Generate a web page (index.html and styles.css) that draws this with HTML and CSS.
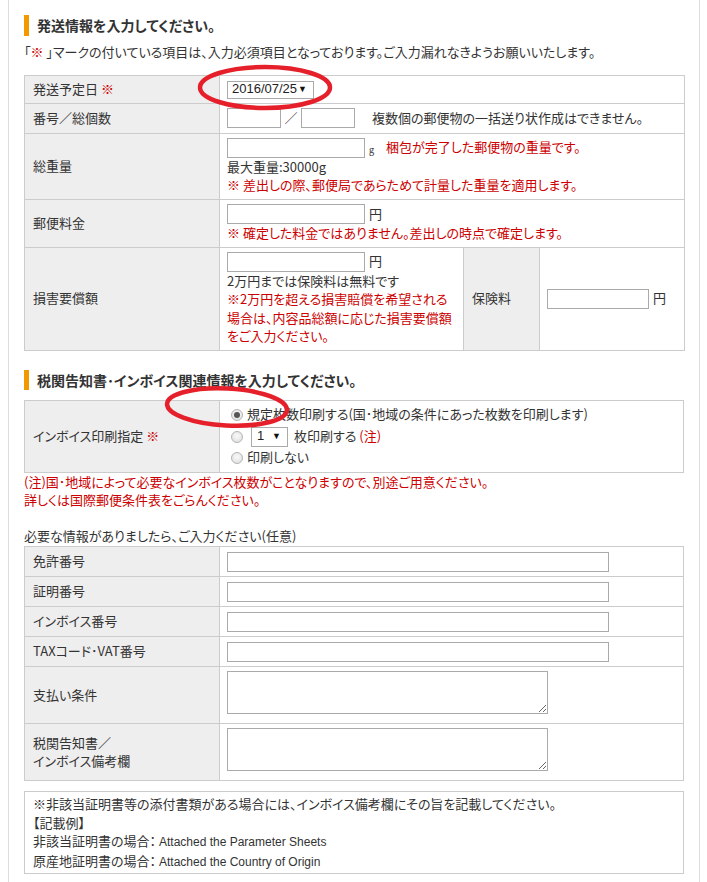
FILE: index.html
```html
<!DOCTYPE html>
<html lang="ja">
<head>
<meta charset="utf-8">
<title>発送情報の入力</title>
<link rel="stylesheet" href="styles.css">
</head>
<body>
<div class="page">
  <h2 class="sec-title first">発送情報を入力してください。</h2>
  <p class="intro">「<span class="req">※</span> 」マークの付いている項目は、入力必須項目となっております。ご入力漏れなきようお願いいたします。</p>

  <table class="form t1">
    <colgroup><col class="c-label"><col class="c-val"><col class="c-ins"><col class="c-insval"></colgroup>
    <tr class="h28">
      <th>発送予定日 <span class="req">※</span></th>
      <td colspan="3"><span class="sel sel-date"><span class="sel-text">2016/07/25</span><span class="sel-arrow">▼</span></span></td>
    </tr>
    <tr class="h30">
      <th>番号／総個数</th>
      <td colspan="3">
        <div class="line-in">
          <input class="in in-xs" type="text"><span class="slash">／</span><input class="in in-xs" type="text"><span class="aside">複数個の郵便物の一括送り状作成はできません。</span>
        </div>
      </td>
    </tr>
    <tr class="h66">
      <th>総重量</th>
      <td colspan="3" class="stack">
        <div class="line-in"><input class="in in-m" type="text"><span class="unit-g">g</span><span class="warn warn-g">梱包が完了した郵便物の重量です。</span></div>
        <div>最大重量:30000g</div>
        <div class="warn">※ 差出しの際、郵便局であらためて計量した重量を適用します。</div>
      </td>
    </tr>
    <tr class="h48">
      <th>郵便料金</th>
      <td colspan="3" class="stack">
        <div class="line-in"><input class="in in-m" type="text"><span class="unit">円</span></div>
        <div class="warn">※ 確定した料金ではありません。差出しの時点で確定します。</div>
      </td>
    </tr>
    <tr class="h102">
      <th>損害要償額</th>
      <td class="stack">
        <div class="line-in"><input class="in in-m" type="text"><span class="unit">円</span></div>
        <div>2万円までは保険料は無料です</div>
        <div class="warn">※2万円を超える損害賠償を希望される<br>場合は、内容品総額に応じた損害要償額<br>をご入力ください。</div>
      </td>
      <th class="th-ins">保険料</th>
      <td><div class="line-in"><input class="in in-ins" type="text"><span class="unit">円</span></div></td>
    </tr>
  </table>

  <h2 class="sec-title second">税関告知書･インボイス関連情報を入力してください。</h2>

  <table class="form t2">
    <colgroup><col class="c-label"><col></colgroup>
    <tr class="h72">
      <th>インボイス印刷指定 <span class="req">※</span></th>
      <td class="radios">
        <label class="r-line r1"><span class="radio checked"></span>規定枚数印刷する(国･地域の条件にあった枚数を印刷します)</label>
        <label class="r-line r2"><span class="radio"></span><span class="sel sel-num"><span class="sel-text">1</span><span class="sel-arrow">▼</span></span><span class="r-text">枚印刷する <span class="req">(注)</span></span></label>
        <label class="r-line r3"><span class="radio"></span>印刷しない</label>
      </td>
    </tr>
  </table>
  <p class="warn notes">(注)国･地域によって必要なインボイス枚数がことなりますので、別途ご用意ください。<br>詳しくは国際郵便条件表をごらんください。</p>

  <p class="optional">必要な情報がありましたら、ご入力ください(任意)</p>
  <table class="form t3">
    <colgroup><col class="c-label"><col></colgroup>
    <tr class="h30"><th>免許番号</th><td><input class="in in-l" type="text"></td></tr>
    <tr class="h30"><th>証明番号</th><td><input class="in in-l" type="text"></td></tr>
    <tr class="h30"><th>インボイス番号</th><td><input class="in in-l" type="text"></td></tr>
    <tr class="h30"><th>TAXコード･VAT番号</th><td><input class="in in-l" type="text"></td></tr>
    <tr class="h57"><th>支払い条件</th><td class="ta-cell"><textarea class="ta"></textarea></td></tr>
    <tr class="h57"><th>税関告知書／<br>インボイス備考欄</th><td class="ta-cell"><textarea class="ta"></textarea></td></tr>
  </table>

  <div class="notebox">
    <div>※非該当証明書等の添付書類がある場合には、インボイス備考欄にその旨を記載してください。</div>
    <div>【記載例】</div>
    <div>非該当証明書の場合： <span class="en">Attached the Parameter Sheets</span></div>
    <div>原産地証明書の場合： <span class="en">Attached the Country of Origin</span></div>
  </div>
</div>

<svg class="marks" width="707" height="882" viewBox="0 0 707 882" aria-hidden="true">
  <ellipse cx="265" cy="87.5" rx="65" ry="20.5" fill="none" stroke="#e5202a" stroke-width="4.5"/>
  <ellipse cx="227" cy="407" rx="60" ry="18.5" fill="none" stroke="#e5202a" stroke-width="4.5" transform="rotate(3 227 407)"/>
</svg>
</body>
</html>
```

FILE: styles.css
```css
html, body {
  margin: 0;
  padding: 0;
}
body {
  position: relative;
  font-family: "Noto Sans CJK JP", sans-serif;
  font-size: 13px;
  line-height: 18.5px;
  color: #333;
  font-feature-settings: "palt";
  background: #fff;
}
.page {
  margin-left: 8px;
  width: 660px;
  padding: 1px 15px 10px;
  min-height: 871px;
  border-left: 1px solid #ddd;
  border-right: 1px solid #ddd;
}
.sec-title {
  margin: 0;
  font-size: 14px;
  font-weight: bold;
  line-height: 21px;
  border-left: 5px solid #f39800;
  padding-left: 8px;
  color: #333;
}
.sec-title.first { margin-top: 14px; }
.sec-title.second { margin-top: 19px; margin-bottom: 10px; line-height: 20px; }
.intro {
  margin: 7px 0 13px;
}
.req { color: #cc0000; }
.warn { color: #cc0000; }

table.form {
  width: 660px;
  border-collapse: collapse;
  table-layout: fixed;
}
.c-label { width: 195px; }
.t1 .c-val { width: 244px; }
.t1 .c-ins { width: 76px; }
.t1 .c-insval { width: 145px; }

.form th, .form td {
  border: 1px solid #ccc;
  padding: 0 7px;
  vertical-align: middle;
}
.form th {
  background: #eee;
  font-weight: normal;
  text-align: left;
  padding-left: 8px;
}
.form td.stack {
  padding-top: 4px;
  padding-bottom: 4px;
}
.h28 { height: 28px; }
.h30 { height: 30px; }
.h48 { height: 48px; }
.h57 { height: 57px; }
.h66 { height: 66px; }
.h72 { height: 72px; }
.h102 { height: 102px; }

.line-in {
  display: flex;
  align-items: center;
  height: 20px;
}
.in {
  box-sizing: border-box;
  height: 20px;
  border: 1px solid #aaa;
  background: #fff;
  padding: 0 3px;
  margin: 0;
  font: inherit;
  display: block;
}
.in-xs { width: 54px; }
.in-m { width: 138px; }
.in-ins { width: 102px; }
.in-l { width: 382px; }
.slash {
  width: 20px;
  text-align: center;
  color: #555;
}
.aside { margin-left: 17px; }
.unit { margin-left: 4px; }
.unit-g {
  margin-left: 4px;
  font-size: 9px;
  line-height: 1;
  margin-top: 3px;
}
.warn-g { margin-left: 12px; }

.th-ins { padding-left: 8px; }

.sel {
  box-sizing: border-box;
  display: inline-flex;
  align-items: center;
  justify-content: space-between;
  border: 1px solid #aaa;
  background: #fff;
  font-family: "Liberation Sans", Arial, sans-serif;
  color: #222;
  vertical-align: middle;
}
.sel-date {
  width: 87px;
  height: 18px;
  padding: 0 6px 0 4px;
  font-size: 13px;
}
.sel-arrow {
  font-size: 9px;
  line-height: 1;
  color: #111;
}
.sel-num {
  width: 37px;
  height: 20px;
  padding: 0 6px 0 5px;
  font-size: 13px;
}

.radios {
  padding-top: 3px !important;
  padding-bottom: 4px !important;
}
.r-line {
  display: flex;
  align-items: center;
}
.r-line.r1 { height: 21px; }
.r-line.r2 { height: 23px; }
.r-line.r3 { height: 19px; }
.radio {
  box-sizing: border-box;
  width: 12px;
  height: 12px;
  border-radius: 50%;
  border: 1px solid #b5b5b5;
  background: radial-gradient(circle at 50% 40%, #fafafa 0%, #e4e4e4 70%, #d6d6d6 100%);
  margin: 0 4px 0 4px;
  flex: none;
  display: flex;
  align-items: center;
  justify-content: center;
}
.radio.checked::after {
  content: "";
  width: 6px;
  height: 6px;
  border-radius: 50%;
  background: #555;
}
.r2 .sel-num { margin-left: 4px; }
.r-text { margin-left: 6px; }

.notes {
  margin: 0;
}
.optional {
  margin: 17px 0 1px;
}
.ta-cell {
  padding-top: 4px !important;
  padding-bottom: 8px !important;
  vertical-align: top !important;
}
.ta {
  display: block;
  box-sizing: border-box;
  width: 321px;
  height: 43px;
  border: 1px solid #aaa;
  margin: 0;
  padding: 2px;
  font: inherit;
  resize: both;
}

.notebox {
  margin-top: 10px;
  border: 1px solid #ccc;
  padding: 3px 8px 2px;
}
.en {
  font-family: "Liberation Sans", Arial, sans-serif;
  font-size: 12px;
  font-feature-settings: normal;
}

.marks {
  position: absolute;
  left: 0;
  top: 0;
  pointer-events: none;
}
```
